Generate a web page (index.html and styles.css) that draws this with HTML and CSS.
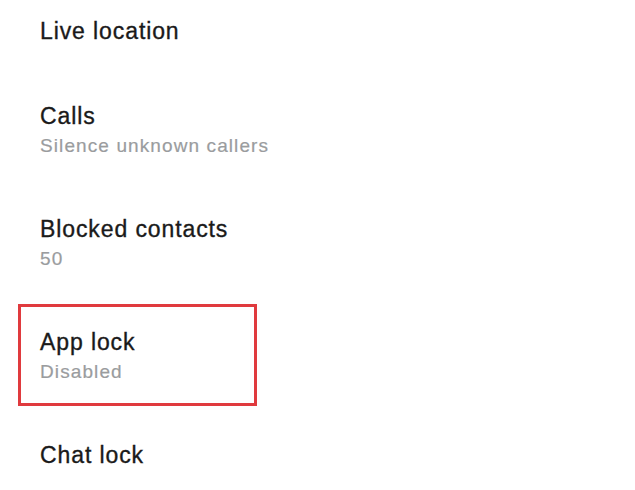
FILE: index.html
```html
<!DOCTYPE html>
<html lang="en">
<head>
  <meta charset="UTF-8" />
  <title>Privacy settings</title>
  <link rel="stylesheet" href="styles.css">
</head>
<body>

  <ul class="settings-list">
    <li class="settings-item">
      <div class="item-title">Live location</div>
    </li>
    <li class="settings-item">
      <div class="item-title">Calls</div>
      <div class="item-sub">Silence unknown callers</div>
    </li>
    <li class="settings-item">
      <div class="item-title">Blocked contacts</div>
      <div class="item-sub">50</div>
    </li>
    <!-- highlighted row -->
    <li class="settings-item is-marked">
      <div class="item-title">App lock</div>
      <div class="item-sub">Disabled</div>
    </li>
    <li class="settings-item">
      <div class="item-title">Chat lock</div>
    </li>
  </ul>

</body>
</html>
```

FILE: styles.css
```css
/* Page */
body {
  margin: 0;
  background: #fff;
  font-family: "Liberation Sans", Arial, sans-serif;
  color: #1a1a1a;
  overflow: hidden;
}

/* List of settings rows (page is scrolled a little) */
.settings-list {
  list-style: none;
  margin: -7px 0 0;
  padding: 0 0 0 18px;
  display: flex;
  flex-direction: column;
  gap: 11px;
}

.settings-item {
  padding: 21px 19px 19px;
  border: 3px solid transparent;
}

.settings-item.is-marked {
  width: 239px;
  box-sizing: border-box;
  border-color: #e03a3e;
}

.item-title {
  font-size: 23px;
  line-height: 28px;
  letter-spacing: 0.9px;
  -webkit-text-stroke: 0.35px currentColor;
  white-space: nowrap;
}

.item-sub {
  margin-top: 4px;
  font-size: 19px;
  line-height: 24px;
  letter-spacing: 1.1px;
  -webkit-text-stroke: 0.2px currentColor;
  color: #9a9c9e;
  white-space: nowrap;
}
```
